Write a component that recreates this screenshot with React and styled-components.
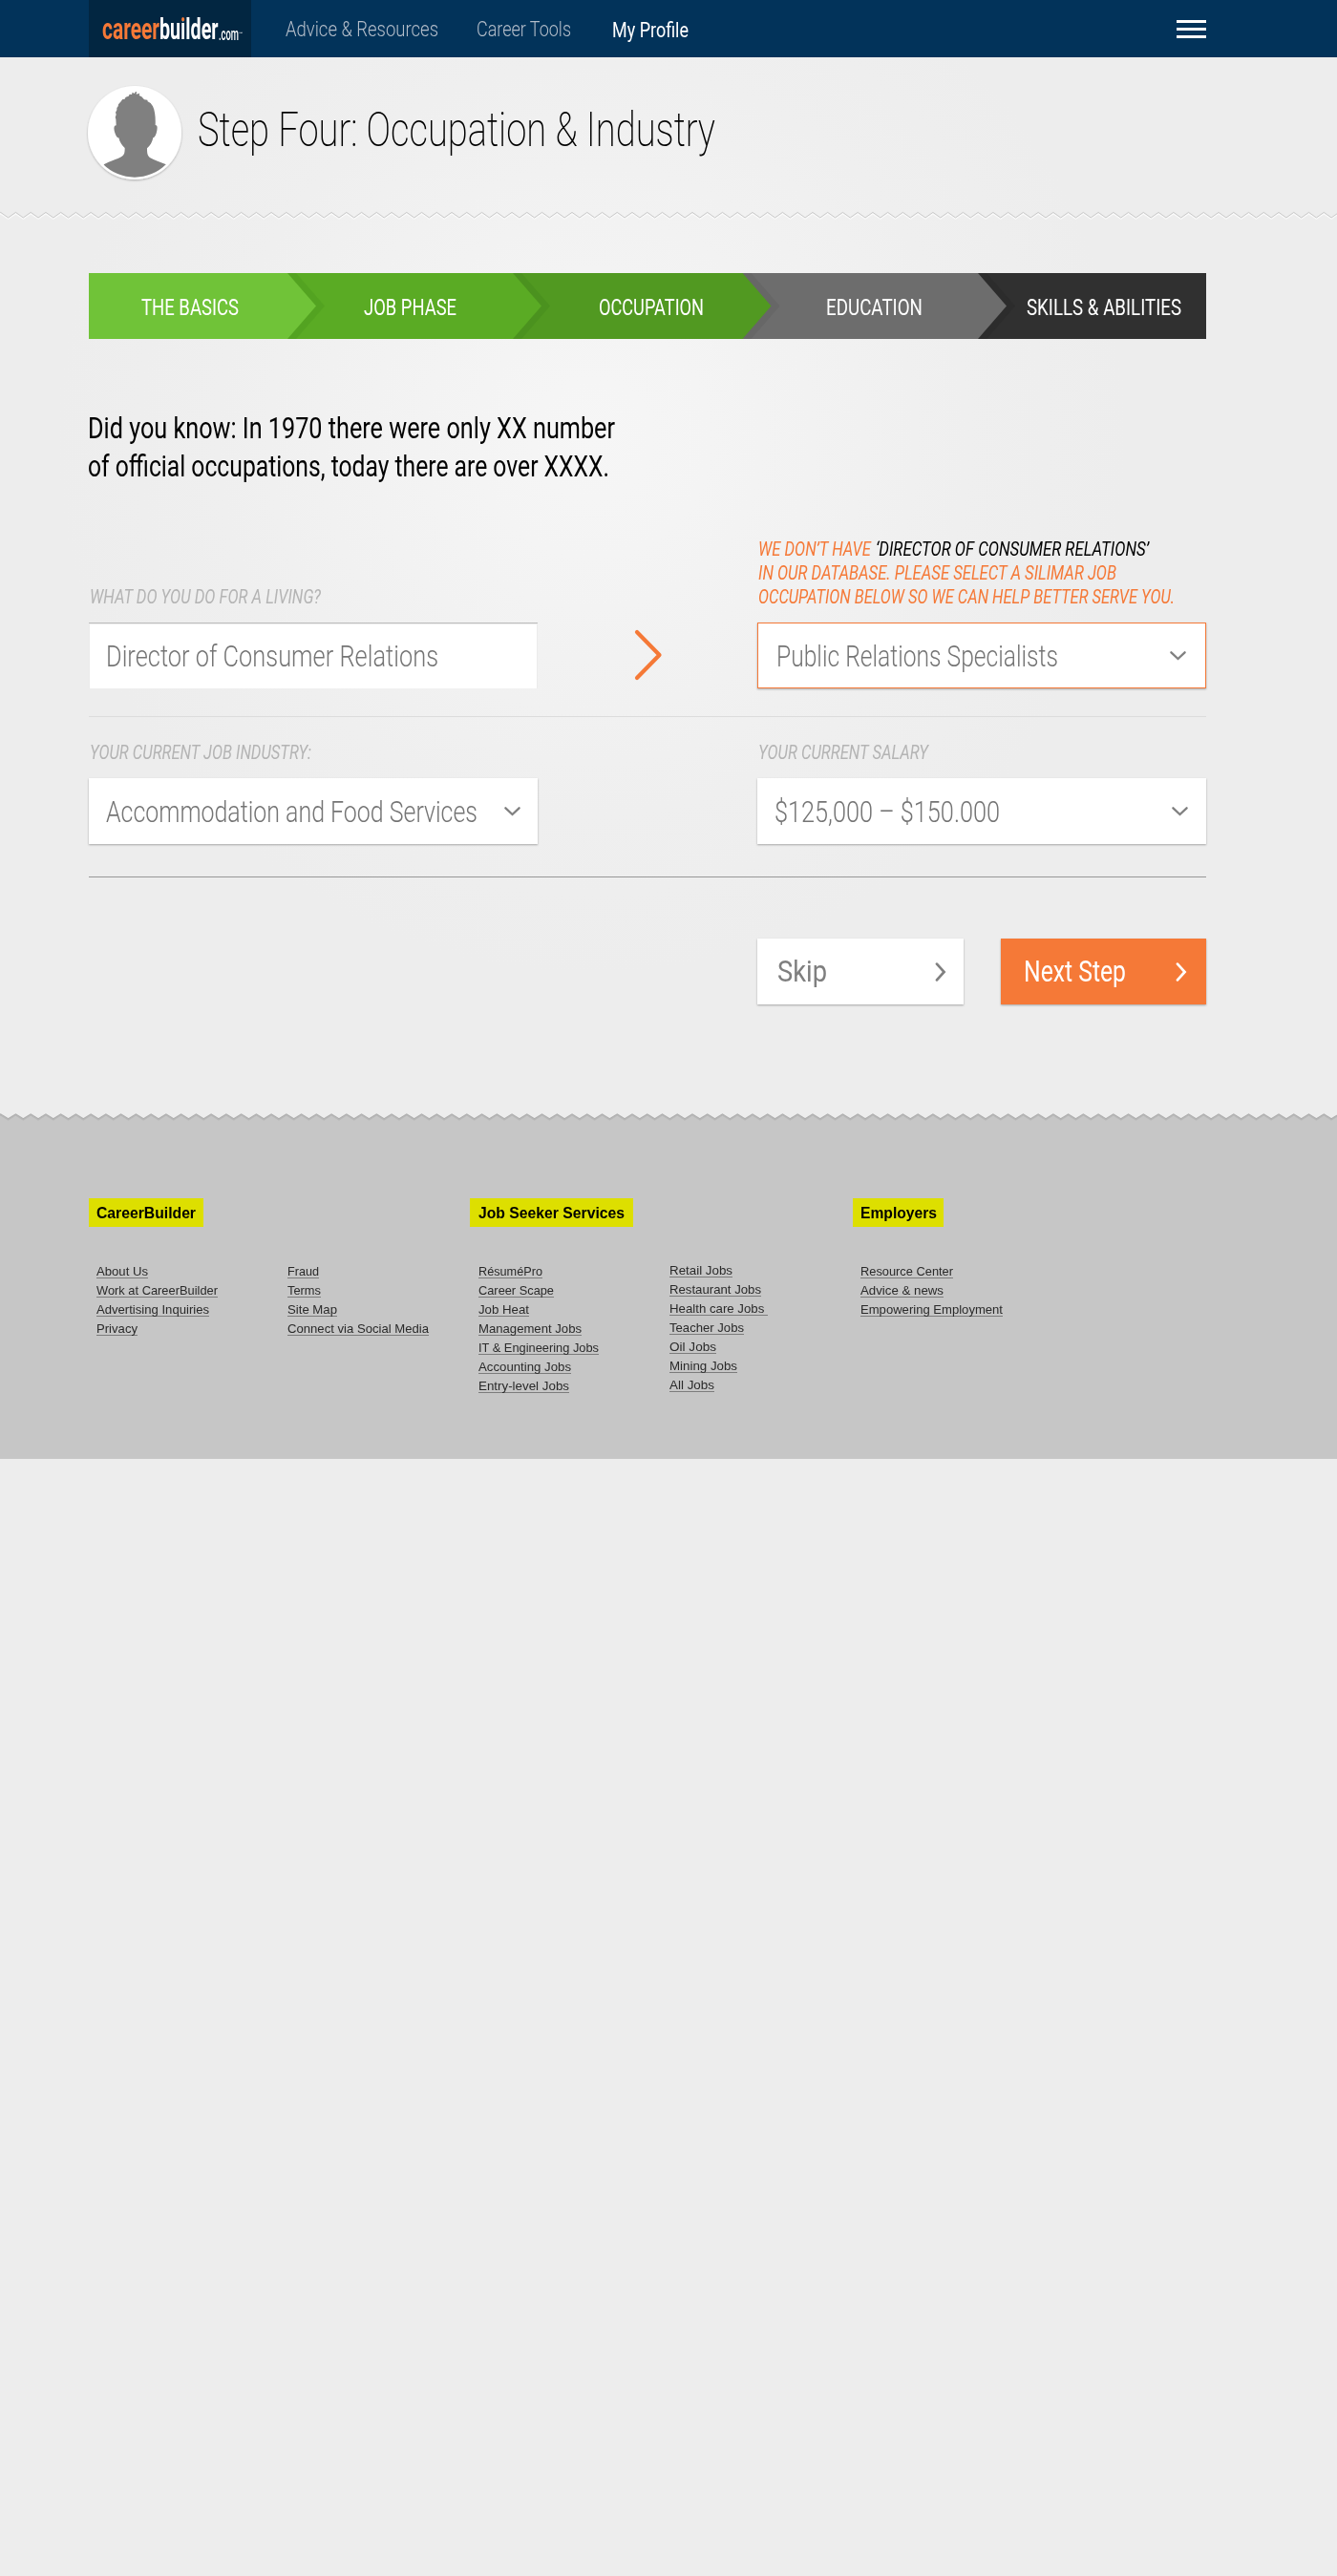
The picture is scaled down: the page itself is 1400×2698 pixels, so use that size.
import React, { useLayoutEffect, useRef, useState } from "react";
import styled, { createGlobalStyle, css } from "styled-components";

const condensed = `Roboto, "Liberation Sans", Arial, sans-serif`;
const grotesk = `"Liberation Sans", Arial, sans-serif`;

const GlobalStyle = createGlobalStyle`
  *, *::before, *::after { box-sizing: border-box; }
  html { background: #ededed; }
  body { margin: 0; background: #ededed; font-family: ${condensed}; }
`;

/* ---------- Text set to a fixed measure ---------- */

const Measure = styled.span`
  display: block;
  flex: none;
  width: ${(p) => p.$w}px;
  white-space: nowrap;
`;

const Squeezed = styled.span`
  display: inline-block;
  vertical-align: top;
  transform-origin: 0 50%;
  white-space: pre;
`;

function Fit({ w, children }) {
  const ref = useRef(null);
  const [scale, setScale] = useState(1);
  useLayoutEffect(() => {
    const el = ref.current;
    el.style.transform = "none";
    const natural = el.getBoundingClientRect().width;
    const next = natural ? w / natural : 1;
    el.style.transform = `scaleX(${next})`;
    setScale(next);
  }, [w]);
  return (
    <Measure $w={w}>
      <Squeezed ref={ref} style={{ transform: `scaleX(${scale})` }}>
        {children}
      </Squeezed>
    </Measure>
  );
}

/* ---------- Page ---------- */

const Page = styled.div`
  width: 1400px;
  min-height: 2698px;
  background: radial-gradient(circle 560px at 620px 460px, #f6f6f6 0%, #f4f4f4 22%, #efefef 70%, #ededed 100%) #ededed;
`;

const gutters = css`
  padding-left: 93px;
  padding-right: 137px;
`;

/* ---------- Navigation ---------- */

const NavBar = styled.nav`
  ${gutters}
  display: flex;
  align-items: center;
  height: 60px;
  background: #02335a;
`;

const Logo = styled.a`
  display: flex;
  align-items: flex-start;
  width: 170px;
  height: 60px;
  padding: 15px 0 0 14px;
  background: #022641;
  color: #fff;
  font-size: 31.5px;
  font-weight: 700;
  line-height: 32px;
`;

const LogoCareer = styled.span`
  color: #f57937;
`;

const LogoI = styled.span`
  background: linear-gradient(#f57937 0 10px, #fff 10px);
  background-clip: text;
  -webkit-background-clip: text;
  color: transparent;
`;

const LogoDomain = styled.span`
  padding-top: 5px;
  font-size: 17.5px;
  font-weight: 500;
`;

const LogoMark = styled.span`
  padding-top: 4px;
  font-size: 5px;
  font-weight: 500;
`;

const NavLinks = styled.div`
  display: flex;
  flex: 1;
  gap: 40px;
  padding-left: 36px;
`;

const NavLink = styled.a`
  font-size: 22px;
  font-weight: ${(p) => (p.$active ? 400 : 300)};
  line-height: 30px;
  color: ${(p) => (p.$active ? "#fff" : "#b3bdc9")};
  padding-top: ${(p) => (p.$active ? 3 : 2)}px;
  margin-left: ${(p) => (p.$active ? 3 : 0)}px;
`;

const MenuButton = styled.button`
  display: flex;
  flex-direction: column;
  gap: 5px;
  padding: 1px 0 0;
  border: 0;
  background: none;
`;

const MenuBar = styled.span`
  width: 31px;
  height: 3px;
  background: #fff;
`;

/* ---------- Heading ---------- */

const TitleBar = styled.header`
  ${gutters}
  display: flex;
  align-items: center;
  height: 160px;
  padding-left: 86px;
  padding-bottom: 2px;
`;

const Title = styled.h1`
  margin: 0 0 6px 11px;
  font-size: 50px;
  font-weight: 200;
  line-height: 60px;
  color: #000;
`;

const Tear = styled.svg`
  display: block;
`;

/* ---------- Progress ---------- */

const Main = styled.main`
  ${gutters}
  height: 934px;
  padding-top: 54px;
`;

const Steps = styled.div`
  display: flex;
  height: 69px;
`;

const Step = styled.div`
  position: relative;
  z-index: ${(p) => p.$z};
  display: flex;
  align-items: center;
  flex: none;
  width: ${(p) => p.$w}px;
  padding: 2px 0 0 ${(p) => p.$inset}px;
  background: ${(p) => p.$bg};
  color: #fff;
  font-size: 24px;
  font-weight: 400;

  &::before,
  &::after {
    content: ${(p) => (p.$shade ? '""' : "none")};
    position: absolute;
    top: 0;
    left: calc(100% - 0.5px);
    width: 30px;
    height: 69px;
    background: ${(p) => p.$bg};
    clip-path: polygon(0 0, 100% 50%, 0 100%);
  }

  &::before {
    width: 39px;
    background: ${(p) => p.$shade};
    clip-path: polygon(0 0, 9px 0, 100% 50%, 9px 100%, 0 100%);
  }
`;

/* ---------- Form ---------- */

const Fact = styled.p`
  margin: 74px 0 54px -1px;
  font-size: 30.5px;
  font-weight: 400;
  line-height: 40px;
  color: #000;
`;

const FormRow = styled.div`
  display: grid;
  grid-template-columns: 470px 230px 470px;
  align-items: end;
`;

const Field = styled.div`
  display: flex;
  flex-direction: column;
`;

const Label = styled.label`
  display: flex;
  flex-direction: column;
  padding: 0 0 14px 1px;
  font-size: 20.4px;
  font-style: italic;
  font-weight: 400;
  line-height: 25px;
  color: ${(p) => (p.$alert ? "#f57937" : "#b4b4b4")};
`;

const LabelLine = styled.span`
  display: flex;
  gap: 5px;
`;

const Quoted = styled.span`
  color: #000;
`;

const Control = styled.div`
  display: flex;
  align-items: center;
  justify-content: space-between;
  height: 69px;
  padding: 1px ${(p) => p.$right || 0}px 0 ${(p) => p.$left || 19}px;
  background: #fff;
  color: #757575;
  font-size: 32px;
  font-weight: 300;
  box-shadow: 0 1px 2px rgba(0, 0, 0, 0.3);

  ${(p) =>
    p.$kind === "input" &&
    css`
      box-shadow: inset 0 1px 0 #bcbcbc, inset 0 2px 0 #ededed, inset 1px 0 0 #ebebeb, inset -1px 0 0 #ebebeb;
    `}
  ${(p) =>
    p.$kind === "alert" &&
    css`
      border: 1px solid #f57937;
    `}
`;

const Pointer = styled.div`
  display: flex;
  justify-content: center;
  align-items: center;
  height: 69px;
  padding: 0 0 1px 2px;
`;

const Rule = styled.hr`
  height: 1px;
  margin: ${(p) => p.$m};
  border: 0;
  background: ${(p) => p.$color};
`;

const Actions = styled.div`
  display: flex;
  justify-content: flex-end;
  gap: 39px;
`;

const Button = styled.button`
  display: flex;
  align-items: center;
  justify-content: space-between;
  width: ${(p) => p.$w}px;
  height: 69px;
  padding: 0 ${(p) => p.$right}px 0 ${(p) => p.$left}px;
  border: 0;
  background: ${(p) => (p.$primary ? "#f57937" : "#fff")};
  color: ${(p) => (p.$primary ? "#fff" : "#7f7f7f")};
  font-family: inherit;
  font-size: 31px;
  font-weight: 400;
  text-align: left;
  box-shadow: 0 1px 2px rgba(0, 0, 0, 0.3);
`;

/* ---------- Footer ---------- */

const FooterBox = styled.footer`
  height: 362px;
  background: #c6c6c6;
  font-family: ${grotesk};
`;

const FooterGrid = styled.div`
  ${gutters}
  display: grid;
  grid-template-columns: 399px 401px 370px;
  padding-top: 79px;
`;

const Group = styled.section`
  min-width: 0;
`;

const Tag = styled.h2`
  width: ${(p) => p.$w}px;
  height: 30px;
  margin: 0 0 40px;
  padding-left: ${(p) => p.$inset}px;
  background: #dddf00;
  font-size: 16px;
  font-weight: 700;
  line-height: 31px;
  color: #000;
`;

const LinkColumns = styled.div`
  display: grid;
  grid-template-columns: 200px 200px;
  padding-left: ${(p) => p.$inset}px;
`;

const LinkColumn = styled.div`
  display: flex;
  flex-direction: column;
  align-items: flex-start;
  margin-top: ${(p) => p.$lift || 0}px;
`;

const FooterLink = styled.a`
  height: 14px;
  margin-bottom: 6px;
  border-bottom: 1px solid #7c7c7c;
  font-size: 13.4px;
  line-height: 14px;
  color: #2a2a2a;
`;

/* ---------- Drawings ---------- */

const PERIOD = 15.745;

function zigzag(top, bottom, phase) {
  let d = "";
  for (let i = -1; i < 92; i += 1) {
    const x = phase + i * PERIOD;
    d += `${i === -1 ? "M" : "L"}${x.toFixed(2)} ${top}L${(x + PERIOD / 2).toFixed(2)} ${bottom}`;
  }
  return d;
}

const HeaderTear = () => (
  <Tear width="1400" height="12" viewBox="0 0 1400 12" fill="none">
    <path d={zigzag(3.8, 9.2, 0.7)} stroke="#f9f9f9" strokeWidth="1.4" />
    <path d={zigzag(2.4, 8, 0.7)} stroke="#c9c9c9" strokeWidth="1" />
  </Tear>
);

const FooterTear = () => (
  <Tear width="1400" height="10" viewBox="0 0 1400 10" fill="none">
    <path d={`${zigzag(0.9, 6.2, 0.7)}L1460 -5L-20 -5Z`} fill="#ededed" />
    <path d={zigzag(1.9, 7, 0.7)} stroke="#b9b9b9" strokeWidth="1.2" />
    <path d={zigzag(0.8, 5.8, 0.7)} stroke="#adadad" strokeWidth="1.1" />
  </Tear>
);

const Avatar = () => (
  <svg width="110" height="110" viewBox="0 0 330 330">
    <defs>
      <filter id="lift" x="-10%" y="-10%" width="120%" height="120%">
        <feDropShadow dx="0" dy="3" stdDeviation="2.5" floodColor="#000" floodOpacity="0.28" />
      </filter>
      <clipPath id="disc">
        <circle cx="165" cy="165" r="140" />
      </clipPath>
    </defs>
    <circle cx="165" cy="165" r="147" fill="#fff" filter="url(#lift)" />
    <path
      clipPath="url(#disc)"
      fill="#808080"
      d="M107 142L106 122L104 117L107 108L105 101L109 94L109 87L113 82L114 76L122 67L127 60L133 60L137 53L146 50L149 44L156 45L158 38L164 42L168 36L171 36L170 44L181 41L179 48L187 52L195 61L205 62L206 67L215 72L222 82C229 96 231 118 230 141C236 141 237 147 235 158C233 170 229 179 223 181C220 195 214 206 204 214C204 230 205 238 214 244C226 252 246 257 264 265L264 320L68 320L68 265C88 254 111 248 124 240C133 234 134 228 134 213C125 204 118 195 115 181C108 180 104 170 101 158C99 147 101 142 107 142Z"
    />
  </svg>
);

const ChevronDown = () => (
  <svg width="17" height="10" viewBox="0 0 17 10" fill="none">
    <path d="M1.4 1.3L8.5 8L15.6 1.3" stroke="#808080" strokeWidth="2.3" strokeLinecap="round" />
  </svg>
);

const ChevronRight = ({ color }) => (
  <svg width="12" height="20" viewBox="0 0 12 20" fill="none">
    <path d="M2 1.6L9.6 10L2 18.4" stroke={color} strokeWidth="2.7" strokeLinecap="round" />
  </svg>
);

const BigArrow = () => (
  <svg width="30" height="54" viewBox="0 0 30 54" fill="none">
    <path d="M3 3L26.5 27L3 51" stroke="#f57937" strokeWidth="4.2" strokeLinecap="round" strokeLinejoin="round" />
  </svg>
);

/* ---------- Data ---------- */

const steps = [
  { text: "THE BASICS", tw: 102, w: 208.5, inset: 55, bg: "#70c338", shade: "#53a321" },
  { text: "JOB PHASE", tw: 97, w: 236, inset: 79, bg: "#5aab24", shade: "#4b921f" },
  { text: "OCCUPATION", tw: 110, w: 240.5, inset: 89, bg: "#519921", shade: "#676767" },
  { text: "EDUCATION", tw: 101, w: 246.5, inset: 87, bg: "#6d6d6d", shade: "#2c2c2c" },
  { text: "SKILLS & ABILITIES", tw: 162, w: 238.5, inset: 50.5, bg: "#303030", shade: null },
];

const groups = [
  {
    title: "CareerBuilder",
    tagWidth: 120,
    titleWidth: 104,
    inset: 8,
    columns: [
      [["About Us", 54], ["Work at CareerBuilder", 127], ["Advertising Inquiries", 118], ["Privacy", 43]],
      [["Fraud", 33], ["Terms", 35], ["Site Map", 52], ["Connect via Social Media", 148]],
    ],
  },
  {
    title: "Job Seeker Services",
    tagWidth: 171,
    titleWidth: 153,
    inset: 9,
    lift: true,
    columns: [
      [
        ["RésuméPro", 67],
        ["Career Scape", 79],
        ["Job Heat", 53],
        ["Management Jobs", 108],
        ["IT & Engineering Jobs", 126],
        ["Accounting Jobs", 97],
        ["Entry-level Jobs", 95],
      ],
      [
        ["Retail Jobs", 66],
        ["Restaurant Jobs", 96],
        ["Health care Jobs\u00a0", 103],
        ["Teacher Jobs", 78],
        ["Oil Jobs", 49],
        ["Mining Jobs", 71],
        ["All Jobs", 47],
      ],
    ],
  },
  {
    title: "Employers",
    tagWidth: 95,
    titleWidth: 80,
    inset: 8,
    columns: [[["Resource Center", 97], ["Advice & news", 87], ["Empowering Employment", 149]]],
  },
];

export default function App() {
  return (
    <>
      <GlobalStyle />
      <Page>
        <NavBar>
          <Logo>
            <LogoCareer>
              <Fit w={60}>career</Fit>
            </LogoCareer>
            <Fit w={61.5}>
              bu<LogoI>i</LogoI>lder
            </Fit>
            <LogoDomain>
              <Fit w={21}>.com</Fit>
            </LogoDomain>
            <LogoMark>
              <Fit w={4}>™</Fit>
            </LogoMark>
          </Logo>
          <NavLinks>
            <NavLink>
              <Fit w={160}>Advice &amp; Resources</Fit>
            </NavLink>
            <NavLink>
              <Fit w={99}>Career Tools</Fit>
            </NavLink>
            <NavLink $active>
              <Fit w={80}>My Profile</Fit>
            </NavLink>
          </NavLinks>
          <MenuButton aria-label="Menu">
            <MenuBar />
            <MenuBar />
            <MenuBar />
          </MenuButton>
        </NavBar>

        <TitleBar>
          <Avatar />
          <Title>
            <Fit w={542}>Step Four: Occupation &amp; Industry</Fit>
          </Title>
        </TitleBar>
        <HeaderTear />

        <Main>
          <Steps>
            {steps.map((s, i) => (
              <Step key={s.text} $z={steps.length - i} $w={s.w} $inset={s.inset} $bg={s.bg} $shade={s.shade}>
                <Fit w={s.tw}>{s.text}</Fit>
              </Step>
            ))}
          </Steps>

          <Fact>
            <Fit w={552}>Did you know: In 1970 there were only XX number</Fit>
            <Fit w={546}>of official occupations, today there are over XXXX.</Fit>
          </Fact>

          <FormRow>
            <Field>
              <Label>
                <Fit w={242}>WHAT DO YOU DO FOR A LIVING?</Fit>
              </Label>
              <Control $kind="input" $left={18}>
                <Fit w={348}>Director of Consumer Relations</Fit>
              </Control>
            </Field>
            <Pointer>
              <BigArrow />
            </Pointer>
            <Field>
              <Label $alert>
                <LabelLine>
                  <Fit w={118}>WE DON’T HAVE</Fit>
                  <Quoted>
                    <Fit w={286}>‘DIRECTOR OF CONSUMER RELATIONS’</Fit>
                  </Quoted>
                </LabelLine>
                <Fit w={375}>IN OUR DATABASE. PLEASE SELECT A SILIMAR JOB</Fit>
                <Fit w={436}>OCCUPATION BELOW SO WE CAN HELP BETTER SERVE YOU.</Fit>
              </Label>
              <Control $kind="alert" $left={19} $right={20.5}>
                <Fit w={295}>Public Relations Specialists</Fit>
                <ChevronDown />
              </Control>
            </Field>
          </FormRow>

          <Rule $color="#dcdcdc" $m="29px 0 25px" />

          <FormRow>
            <Field>
              <Label>
                <Fit w={232}>YOUR CURRENT JOB INDUSTRY:</Fit>
              </Label>
              <Control $left={18} $right={18}>
                <Fit w={389}>Accommodation and Food Services</Fit>
                <ChevronDown />
              </Control>
            </Field>
            <span />
            <Field>
              <Label>
                <Fit w={178}>YOUR CURRENT SALARY</Fit>
              </Label>
              <Control $left={18} $right={19}>
                <Fit w={236}>$125,000 – $150.000</Fit>
                <ChevronDown />
              </Control>
            </Field>
          </FormRow>

          <Rule $color="#979797" $m="34px 0 64px" />

          <Actions>
            <Button $w={216} $left={21} $right={18}>
              <Fit w={52}>Skip</Fit>
              <ChevronRight color="#808080" />
            </Button>
            <Button $primary $w={215} $left={24} $right={20}>
              <Fit w={107}>Next Step</Fit>
              <ChevronRight color="#fff" />
            </Button>
          </Actions>
        </Main>

        <FooterBox>
          <FooterTear />
          <FooterGrid>
            {groups.map((g) => (
              <Group key={g.title}>
                <Tag $w={g.tagWidth} $inset={g.inset}>
                  <Fit w={g.titleWidth}>{g.title}</Fit>
                </Tag>
                <LinkColumns $inset={g.inset}>
                  {g.columns.map((links, i) => (
                    <LinkColumn key={links[0][0]} $lift={g.lift && i === 1 ? -1 : 0}>
                      {links.map(([text, w]) => (
                        <FooterLink key={text}>
                          <Fit w={w}>{text}</Fit>
                        </FooterLink>
                      ))}
                    </LinkColumn>
                  ))}
                </LinkColumns>
              </Group>
            ))}
          </FooterGrid>
        </FooterBox>
      </Page>
    </>
  );
}
